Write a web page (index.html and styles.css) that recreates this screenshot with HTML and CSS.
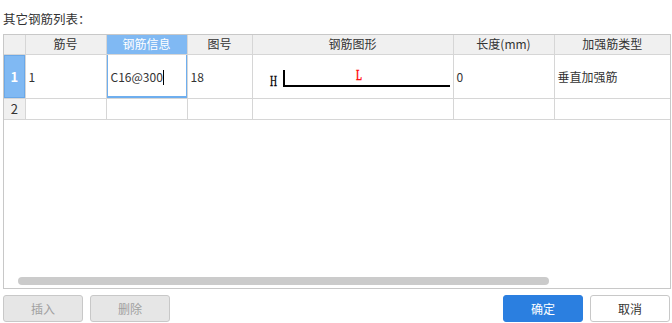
FILE: index.html
```html
<!DOCTYPE html>
<html lang="zh-CN">
<head>
    <meta charset="UTF-8">
    <title>其它钢筋列表</title>
    <link rel="stylesheet" href="styles.css">
</head>
<body>
    <div class="panel">
        <div class="panel-title">其它钢筋列表：</div>

        <div class="grid-box">
            <table class="grid">
                <colgroup>
                    <col class="c-idx">
                    <col class="c-no">
                    <col class="c-info">
                    <col class="c-fig">
                    <col class="c-shape">
                    <col class="c-len">
                    <col class="c-type">
                </colgroup>
                <thead>
                    <tr>
                        <th></th>
                        <th>筋号</th>
                        <th class="active">钢筋信息</th>
                        <th>图号</th>
                        <th>钢筋图形</th>
                        <th>长度(mm)</th>
                        <th>加强筋类型</th>
                    </tr>
                </thead>
                <tbody>
                    <tr class="row-tall">
                        <td class="idx current">1</td>
                        <td>1</td>
                        <td class="editing">C16@300<span class="caret"></span></td>
                        <td>18</td>
                        <td class="shape">
                            <svg width="200" height="43" viewBox="0 0 200 43">
                                <text x="17" y="31" class="dim" textLength="7" lengthAdjust="spacingAndGlyphs">H</text>
                                <text x="103" y="25" class="dim red" textLength="6" lengthAdjust="spacingAndGlyphs">L</text>
                                <path d="M31 15 V31 H197" fill="none" stroke="#000" stroke-width="2"/>
                            </svg>
                        </td>
                        <td>0</td>
                        <td>垂直加强筋</td>
                    </tr>
                    <tr>
                        <td class="idx">2</td>
                        <td></td>
                        <td></td>
                        <td></td>
                        <td></td>
                        <td></td>
                        <td></td>
                    </tr>
                </tbody>
            </table>
            <div class="hscroll"></div>
        </div>

        <div class="actions">
            <button class="btn disabled">插入</button>
            <button class="btn disabled">删除</button>
            <span class="spacer"></span>
            <button class="btn primary">确定</button>
            <button class="btn">取消</button>
        </div>
    </div>
</body>
</html>
```

FILE: styles.css
```css
* {
    margin: 0;
    padding: 0;
    box-sizing: border-box;
}

body {
    background: #fff;
    font-family: "Noto Sans CJK SC", "Liberation Sans", sans-serif;
    font-size: 12px;
    color: #333;
}

.panel {
    width: 672px;
    padding: 0 2px 0 3px;
}

.panel-title {
    height: 34px;
    padding-top: 11px;
    line-height: 16px;
    font-size: 12.5px;
}

.grid-box {
    width: 668px;
    height: 255px;
    border: 1px solid #c8c8c8;
    display: flex;
    flex-direction: column;
}

.grid {
    border-collapse: collapse;
    table-layout: fixed;
    width: 666px;
}

.c-idx { width: 21px; }
.c-no { width: 81px; }
.c-info { width: 81px; }
.c-fig { width: 65px; }
.c-shape { width: 201px; }
.c-len { width: 101px; }
.c-type { width: 116px; }

.grid th,
.grid td {
    border-right: 1px solid #d6d6d6;
    border-bottom: 1px solid #d6d6d6;
    white-space: nowrap;
    overflow: hidden;
}

.grid th:last-child,
.grid td:last-child {
    border-right: none;
}

.grid th {
    height: 19px;
    background: #f0f0f0;
    font-weight: normal;
    text-align: center;
    line-height: 18px;
}

.grid th.active {
    background: #80b9f3;
    color: #fff;
}

.grid td {
    height: 21px;
    padding: 0 3px;
    vertical-align: middle;
}

.grid .row-tall td {
    height: 44px;
}

.grid td.idx {
    background: #f0f0f0;
    text-align: center;
    padding: 0;
    font-size: 13px;
}

.grid td.idx.current {
    background: #80b9f3;
    color: #fff;
    font-weight: bold;
    box-shadow: inset 0 0 0 1px #6aa8e8;
}

.grid td.editing {
    position: relative;
    padding-left: 4px;
}

.grid td.editing::after {
    content: "";
    position: absolute;
    top: -2px;
    left: -1px;
    right: -1px;
    bottom: 0;
    border: 2px solid #6eaeee;
}

.caret {
    display: inline-block;
    width: 1px;
    height: 15px;
    background: #000;
    vertical-align: -3px;
}

.grid td.shape {
    padding: 0;
}

.shape svg {
    display: block;
}

.dim {
    font-family: "Liberation Serif", "DejaVu Serif", serif;
    font-size: 15px;
    font-weight: normal;
    fill: #000;
    stroke: #000;
    stroke-width: 0.35px;
}

.dim.red {
    fill: #f00;
    stroke: #f00;
    stroke-width: 0.5px;
}

.hscroll {
    margin: auto 0 3px 14px;
    width: 531px;
    height: 8px;
    border-radius: 4px;
    background: #cbcbcb;
}

.actions {
    display: flex;
    margin-top: 6px;
    gap: 7px;
}

.spacer {
    flex: 1;
}

.btn {
    width: 80px;
    height: 27px;
    border: 1px solid #c8c8c8;
    border-radius: 3px;
    background: #fff;
    color: #333;
    font-family: inherit;
    font-size: 12px;
}

.btn.disabled {
    background: #e6e6e6;
    color: #a0a0a0;
}

.btn.primary {
    background: #2b7fe0;
    border-color: #2b7fe0;
    color: #fff;
}
```
